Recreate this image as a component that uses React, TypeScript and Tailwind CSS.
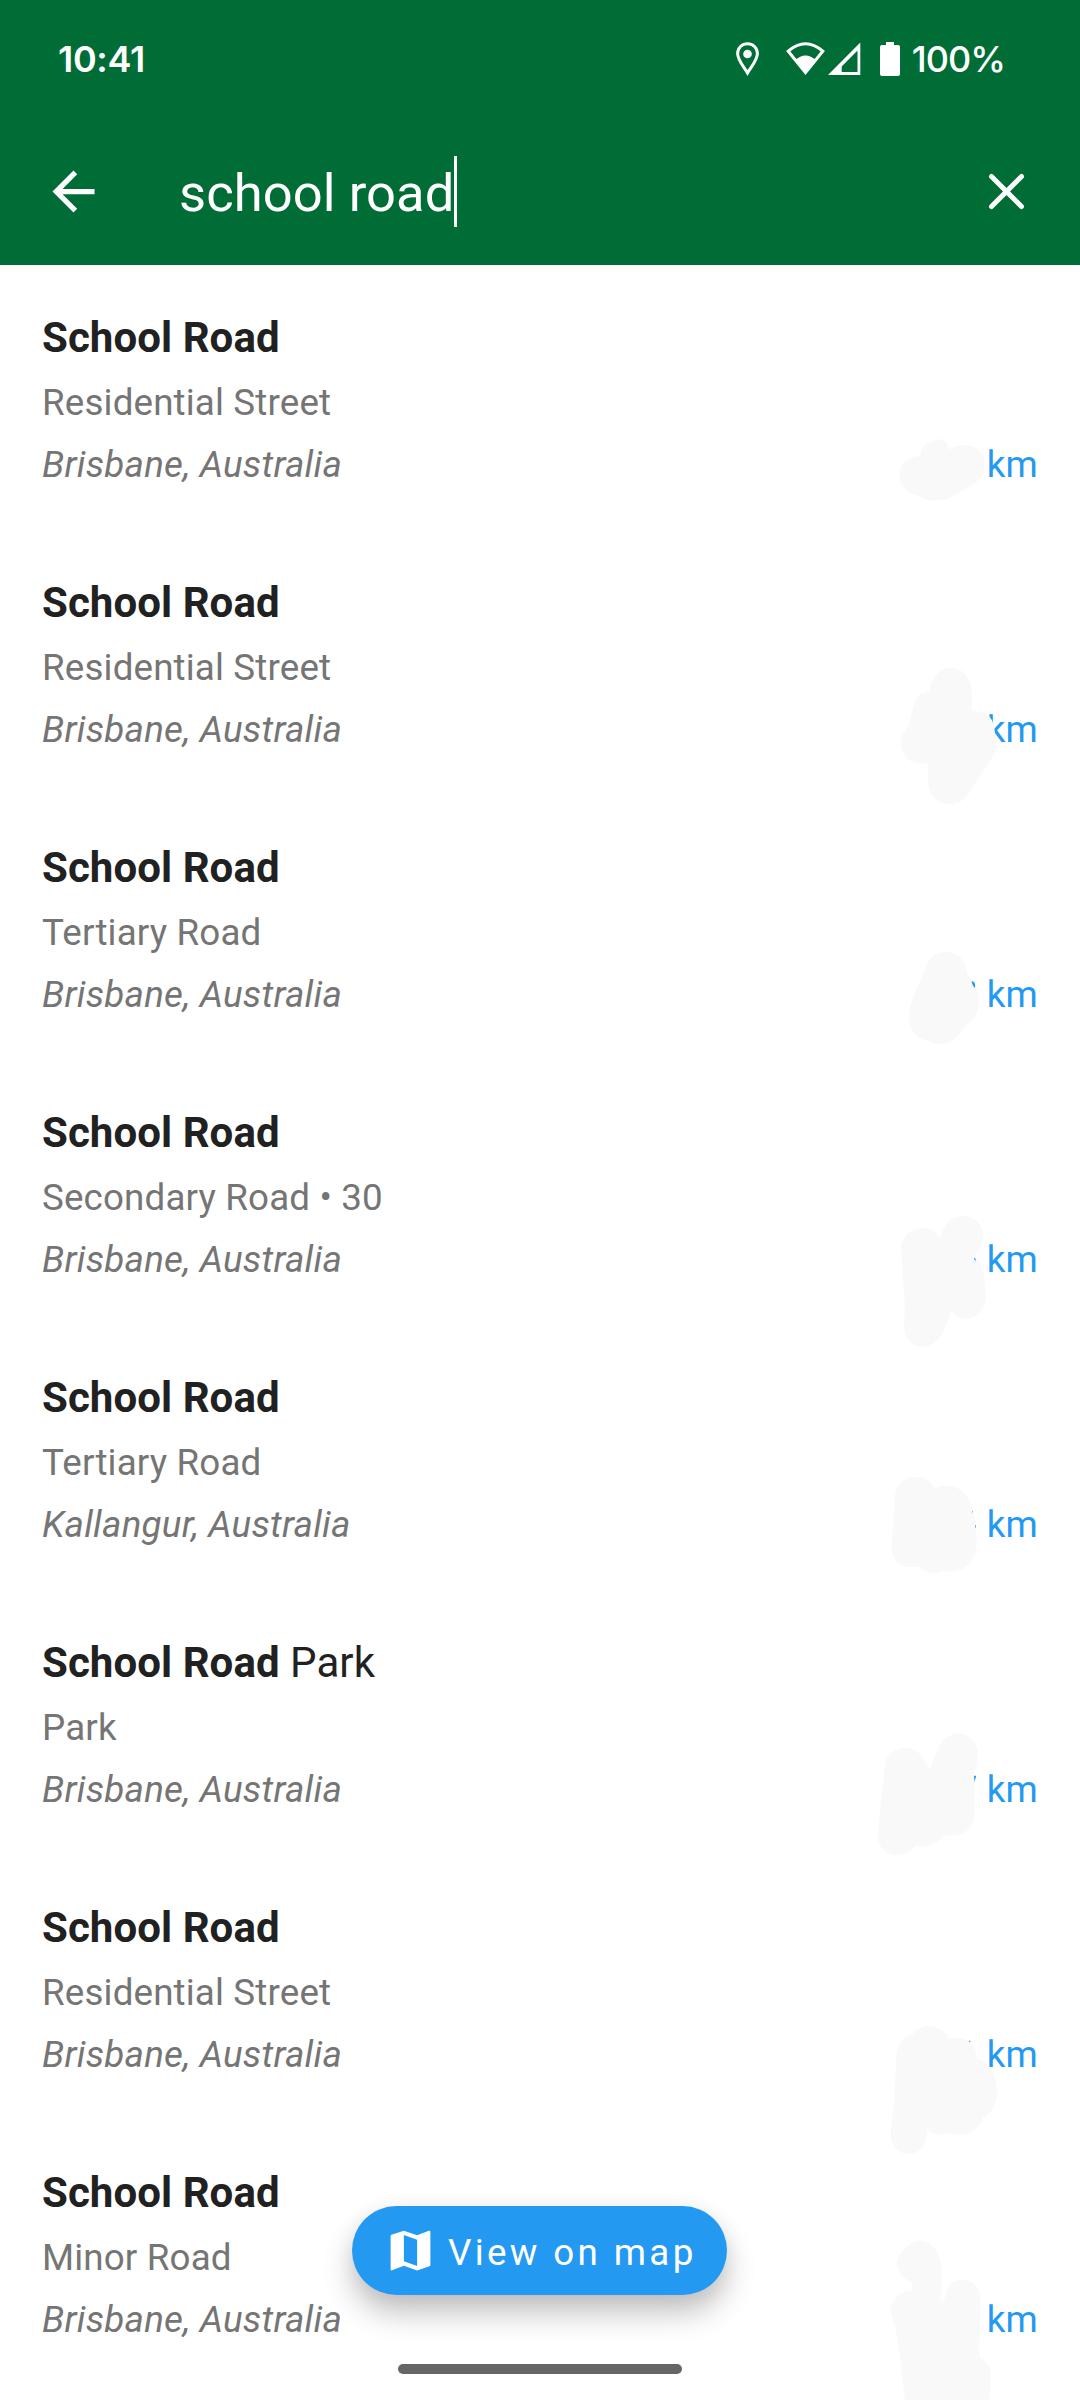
import React from 'react';

type Result = {
  match: string;
  rest?: string;
  kind: string;
  place: string;
  smudge: string;
  specks?: string;
  shift: number;
};

// Smudge outlines are in thirds of a pixel, relative to a box that starts 860px from the left of its row.
const results: Result[] = [
  {
    match: 'School Road',
    kind: 'Residential Street',
    place: 'Brisbane, Australia',
    shift: 0,
    smudge:
      'M118 630C118 595 146 574 181 574C183 545 198 534 214 532C236 514 262 524 268 555C310 525 376 540 375 604C374 630 360 645 340 657L285 690C250 712 210 710 190 700L158 687C134 676 118 655 118 630Z',
  },
  {
    match: 'School Road',
    kind: 'Residential Street',
    place: 'Brisbane, Australia',
    shift: 8,
    smudge:
      'M211 471C212 435 240 406 273 406C310 406 333 436 334 476Q337 495 335 536C370 532 392 548 398 568C406 590 407 620 407 640C405 663 398 673 390 684L325 785C300 822 245 828 214 785C202 765 203 735 204 690C160 704 122 672 122 632C122 608 134 594 143 585C154 565 155 520 172 495C182 480 195 478 211 474Z',
  },
  {
    match: 'School Road',
    kind: 'Tertiary Road',
    place: 'Brisbane, Australia',
    shift: 171,
    smudge:
      'M202 335C212 312 235 300 260 300C294 300 318 326 322 366C344 392 358 420 357 451C356 485 340 506 316 519C302 543 282 576 237 576C222 576 212 571 205 566C170 562 146 532 146 495C146 450 178 400 190 368Z',
    specks: 'M335 388C343 387 347 396 345 408C341 404 335 397 335 388Z',
  },
  {
    match: 'School Road',
    kind: 'Secondary Road • 30',
    place: 'Brisbane, Australia',
    shift: 170,
    smudge:
      'M124 405C120 364 150 334 186 334C210 334 229 346 240 363C250 322 275 298 309 298C345 298 370 325 370 359C370 380 357 398 346 418C370 442 372 480 377 520C383 565 359 606 319 606C300 606 285 598 274 582C262 610 257 646 235 667C200 708 132 694 132 627Q136 580 132 530Z',
    specks: 'M342 423L347 427V432L342 428Z',
  },
  {
    match: 'School Road',
    kind: 'Tertiary Road',
    place: 'Kallangur, Australia',
    shift: 168,
    smudge:
      'M104 352C108 308 135 287 169 287C195 287 213 301 224 322C264 304 304 320 320 346C340 380 345 410 349 448C353 492 350 518 332 543C310 572 277 575 250 569C220 582 192 575 178 556C130 568 94 542 94 500C96 470 100 440 101 406Z',
    specks: 'M337 391L339 389V398ZM346 432H348V440H346Z',
  },
  {
    match: 'School Road',
    rest: ' Park',
    kind: 'Park',
    place: 'Brisbane, Australia',
    shift: 165,
    smudge:
      'M74 365C76 328 104 309 136 309C172 309 192 335 200 364L211 371C224 336 232 306 250 286C290 244 354 270 354 330C354 350 345 372 343 395C342 430 346 475 344 515C338 558 298 580 253 570C228 598 205 609 166 603C130 638 95 640 65 608C55 595 53 580 54 560C59 510 62 465 69 423Z',
    specks: 'M342 392H349L343 411Z',
  },
  {
    match: 'School Road',
    kind: 'Residential Street',
    place: 'Brisbane, Australia',
    shift: 171,
    smudge:
      'M109 440C108 402 125 378 158 367C190 328 243 336 268 382C307 365 352 394 351 440C395 449 410 500 411 540C412 570 397 603 370 616C353 662 310 680 265 661C238 673 214 667 202 652C202 672 196 696 187 706C150 748 92 720 93 670C92 635 101 610 102 575Z',
    specks: 'M327 386H331V391H328Z',
  },
  {
    match: 'School Road',
    kind: 'Minor Road',
    place: 'Brisbane, Australia',
    shift: 171,
    smudge:
      'M181 192C216 192 235 222 242 257Q247 290 243 335L241 371H254C256 330 275 308 308 308C338 308 360 331 361 364C364 410 359 455 357 506L360 542C380 550 392 570 393 593L388 675H136C126 600 120 520 105 450C100 430 93 418 93 400C93 370 115 341 156 341V315C130 306 111 285 112 258C112 230 148 192 181 192Z',
  },
];

function ResultRow({ item }: { item: Result }) {
  return (
    <li className="relative flex h-[265px] shrink-0 items-end justify-between px-[42px] pb-[40px]">
      <div className="flex flex-col">
        <h2 className="mb-[15px] text-[42px] leading-[50px] tracking-[0.06px] whitespace-pre text-[#212121]">
          <span className="font-bold">{item.match}</span>
          {item.rest}
        </h2>
        <p className="mb-[12px] text-[36.75px] leading-[50px] tracking-[0.15px] text-[#757575]">{item.kind}</p>
        <p className="text-[36.75px] leading-[50px] tracking-[0.23px] text-[#757575] italic">{item.place}</p>
      </div>
      <span className="text-[36.75px] leading-[50px] tracking-[0.2px] text-[#2499f2]">km</span>
      <svg
        className="pointer-events-none absolute top-0 left-[860px] h-[265px] w-[220px] overflow-visible"
        viewBox="0 0 660 795"
        aria-hidden="true"
      >
        <g transform={`translate(0 ${item.shift})`}>
          <path d={item.smudge} fill="#f9f9f9" />
          {item.specks && <path d={item.specks} fill="#2499f2" />}
        </g>
      </svg>
    </li>
  );
}

function StatusBar() {
  return (
    <div className="flex h-[118px] items-center justify-between pr-[75px] pl-[58px] font-[Inter,sans-serif] text-[36px] leading-[40px] font-medium">
      <span className="font-semibold tracking-[-0.3px]">10:41</span>
      <div className="flex items-center">
        <svg className="mr-[27px] h-[34px] w-[23px]" viewBox="0 0 23 34" fill="none">
          <path d="M11.5 1.7C6 1.7 1.6 6 1.6 11.6C1.6 18.3 8 25 11.5 31C15 25 21.4 18.3 21.4 11.6C21.4 6 17 1.7 11.5 1.7Z" stroke="white" strokeWidth="3" />
          <circle cx="11.5" cy="12" r="4.3" fill="white" />
        </svg>
        <svg className="mr-[3px] h-[34px] w-[39px]" viewBox="0 0 39 34" fill="none">
          <path d="M2.2 9.2Q19.5 -5.6 36.8 9.2L19.5 30.6Z" stroke="white" strokeWidth="3" />
          <path d="M9 18.5Q19.5 8.5 30 18.5L19.5 32Z" fill="white" />
        </svg>
        <svg className="mr-[19px] h-[34px] w-[33px]" viewBox="0 0 33 34">
          <path fillRule="evenodd" d="M32.3 .5V33H0ZM29.5 8.5L13.7 24.5V30H29.5Z" fill="white" />
        </svg>
        <svg className="mr-[12px] h-[34px] w-[20px]" viewBox="0 0 20 34">
          <path d="M6 0H14V3H18Q20 3 20 5V32Q20 34 18 34H2Q0 34 0 32V5Q0 3 2 3H6Z" fill="white" />
        </svg>
        <span className="tracking-[-1px]">100%</span>
      </div>
    </div>
  );
}

export default function App() {
  return (
    <main className="relative flex h-[2400px] w-[1080px] flex-col overflow-hidden bg-white font-[Roboto,sans-serif]">
      <header className="flex h-[265px] shrink-0 flex-col bg-[#006d36] text-white">
        <StatusBar />
        <div className="flex h-[147px] items-center pr-[42px] pl-[42px]">
          <svg className="h-[63px] w-[63px]" viewBox="0 0 24 24" fill="white">
            <path d="M20 11H7.83l5.59-5.59L12 4l-8 8 8 8 1.41-1.41L7.83 13H20v-2z" />
          </svg>
          <div className="ml-[74px] flex items-center">
            <span className="pt-[3px] text-[52.5px] leading-[64px] tracking-[0.08px]">school road</span>
            <span className="h-[71px] w-[3px] bg-white" />
          </div>
          <svg className="ml-auto h-[63px] w-[63px]" viewBox="0 0 63 63" fill="none">
            <path d="M16.5 16.5L46.5 46.5M46.5 16.5L16.5 46.5" stroke="white" strokeWidth="5" strokeLinecap="round" />
          </svg>
        </div>
      </header>

      <ul className="flex flex-col">
        {results.map((item, i) => (
          <ResultRow key={i} item={item} />
        ))}
      </ul>

      <button className="absolute top-[2206px] left-[352px] flex h-[89px] w-[375px] items-center rounded-full bg-[#2499f2] pl-[32px] text-white shadow-[0_18px_30px_0_rgba(0,0,0,0.24),0_2px_20px_0_rgba(0,0,0,0.05)]">
        <svg className="h-[53px] w-[53px]" viewBox="0 0 24 24" fill="white">
          <path d="M20.5 3l-.16.03L15 5.1 9 3 3.36 4.9c-.21.07-.36.25-.36.48V20.5c0 .28.22.5.5.5l.16-.03L9 18.9l6 2.1 5.64-1.9c.21-.07.36-.25.36-.48V3.5c0-.28-.22-.5-.5-.5zM15 19l-6-2.11V5l6 2.11V19z" />
        </svg>
        <span className="ml-[11px] pt-[4px] text-[36.75px] leading-[50px] tracking-[3.35px] whitespace-nowrap">View on map</span>
      </button>
      <div className="absolute top-[2364px] left-[398px] h-[10px] w-[284px] rounded-full bg-[#666666]" />
    </main>
  );
}
